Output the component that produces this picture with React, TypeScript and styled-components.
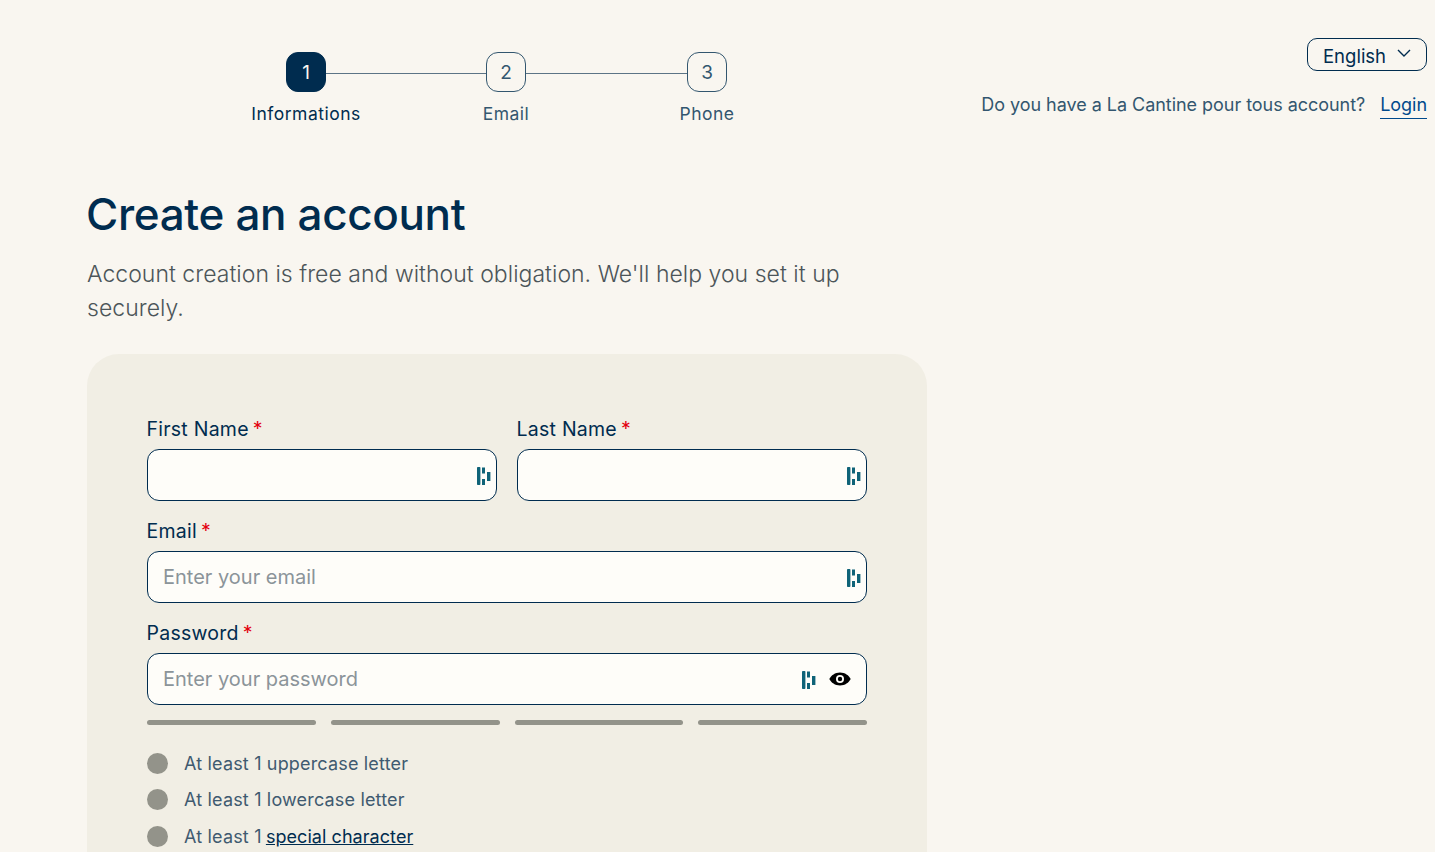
import React from "react";
import styled, { createGlobalStyle } from "styled-components";

const GlobalStyle = createGlobalStyle`
  html, body {
    margin: 0;
    height: 100%;
    overflow: hidden;
    background: #f9f6f0;
    font-family: "Inter", "Noto Sans", sans-serif;
    color: #002c4f;
  }
  * { box-sizing: border-box; }
`;

const Page = styled.div`
  display: flex;
  justify-content: space-between;
  height: 852px;
  overflow: hidden;
  padding: 38px 8px 0 87px;
`;

const Main = styled.main`
  width: 840px;
  flex-shrink: 0;
`;

const Stepper = styled.div`
  display: flex;
  width: 441px;
  margin: 14px 0 0 199px;
`;

const Step = styled.div`
  display: flex;
  flex-direction: column;
  align-items: center;
  width: 40px;
`;

const StepCircle = styled.div<{ $active?: boolean }>`
  width: 40px;
  height: 40px;
  border-radius: 12px;
  display: flex;
  align-items: center;
  justify-content: center;
  font-size: 19px;
  color: ${(p) => (p.$active ? "#f9f6f0" : "#33566f")};
  background: ${(p) => (p.$active ? "#002c4f" : "transparent")};
  border: 1px solid ${(p) => (p.$active ? "#002c4f" : "#33566f")};
`;

const StepLabel = styled.div<{ $active?: boolean }>`
  margin-top: 12px;
  font-size: 17.5px;
  line-height: 20px;
  white-space: nowrap;
  letter-spacing: 0.5px;
  color: ${(p) => (p.$active ? "#002c4f" : "#33566f")};
`;

const StepLine = styled.div<{ $width: number }>`
  width: ${(p) => p.$width}px;
  height: 1px;
  margin-top: 21px;
  background: #5c7486;
`;

const Title = styled.h1`
  margin: 62px 0 0 -1px;
  font-size: 44px;
  line-height: 56px;
  font-weight: 500;
  letter-spacing: -0.35px;
  color: #002c4f;
`;

const Subtitle = styled.p`
  margin: 15px 0 0;
  width: 780px;
  font-size: 23px;
  line-height: 34px;
  font-weight: 300;
  letter-spacing: 0.03px;
  color: #4c5559;
`;

const Card = styled.section`
  margin-top: 29px;
  padding: 60px 60px 40px;
  background: #f1eee4;
  border-radius: 32px;
`;

const Row = styled.div`
  display: flex;
  gap: 20px;
`;

const Field = styled.div`
  flex: 1;
  min-width: 0;
  margin-bottom: 15px;
`;

const Label = styled.label`
  display: block;
  height: 35px;
  margin-left: -0.5px;
  font-size: 19.5px;
  line-height: 30px;
  letter-spacing: 0.25px;
  color: #002c4f;
`;

const Required = styled.span`
  color: #e3000f;
  margin-left: 4px;
`;

const InputBox = styled.div<{ $withEye?: boolean }>`
  display: flex;
  align-items: center;
  height: 52px;
  padding: 0 ${(p) => (p.$withEye ? 15 : 5)}px 0 15px;
  background: #fefdf9;
  border: 1px solid #002c4f;
  border-radius: 12px;
`;

const Input = styled.input`
  flex: 1;
  min-width: 0;
  border: 0;
  outline: 0;
  padding: 0;
  background: transparent;
  font-family: inherit;
  font-size: 20px;
  color: #002c4f;
  &::placeholder {
    color: #8b9499;
    opacity: 1;
  }
`;

const KeySvg = styled.svg`
  margin-top: 2px;
  flex-shrink: 0;
`;

const EyeSvg = styled.svg`
  margin-left: 13px;
  flex-shrink: 0;
`;

const Strength = styled.div`
  display: flex;
  gap: 15px;
  margin-top: 15px;
`;

const Bar = styled.div`
  flex: 1;
  height: 5px;
  border-radius: 3px;
  background: #93938a;
`;

const Rules = styled.ul`
  list-style: none;
  margin: 27px 0 0;
  padding: 0;
  display: flex;
  flex-direction: column;
  gap: 14.5px;
`;

const Rule = styled.li`
  display: flex;
  align-items: center;
  gap: 16px;
  height: 22px;
  font-size: 18px;
  letter-spacing: 0.17px;
  color: #3f5a70;
`;

const Dot = styled.span`
  width: 21px;
  height: 21px;
  border-radius: 50%;
  background: #93938a;
`;

const RuleLink = styled.a`
  margin-left: -1px;
  letter-spacing: 0.06px;
  color: #002c4f;
  text-decoration: underline;
`;

const Side = styled.aside`
  display: flex;
  flex-direction: column;
  align-items: flex-end;
`;

const LangButton = styled.button`
  display: flex;
  align-items: center;
  justify-content: space-between;
  width: 120px;
  height: 33px;
  padding: 2px 15px 0 15px;
  background: transparent;
  border: 1px solid #002c4f;
  border-radius: 10px;
  font-family: inherit;
  font-size: 18.5px;
  color: #002c4f;

  svg {
    margin-bottom: 5px;
  }
`;

const AccountLine = styled.div`
  display: flex;
  align-items: flex-start;
  gap: 15px;
  margin-top: 22px;
  font-size: 18px;
  line-height: 24px;
  letter-spacing: -0.04px;
  color: #33566f;
`;

const Login = styled.a`
  height: 26px;
  color: #004a8c;
  text-decoration: none;
  border-bottom: 1px solid #004a8c;
`;

const KeyIcon = () => (
  <KeySvg width="14" height="18" viewBox="0 0 14 18" fill="#0f6378">
    <rect x="0" y="0" width="3.4" height="18" rx="0.8" />
    <rect x="5" y="0.5" width="3" height="6" />
    <rect x="5" y="12" width="3" height="6" />
    <rect x="10" y="5" width="3.4" height="9" />
  </KeySvg>
);

const EyeIcon = () => (
  <EyeSvg width="22" height="14" viewBox="0 0 22 14">
    <path d="M11 0.5C6 0.5 2.2 3.4 0.3 7 2.2 10.6 6 13.5 11 13.5s8.800-2.900 10.700-6.500C19.800 3.400 16 0.500 11 0.500z" fill="#000" />
    <circle cx="11" cy="7" r="4" fill="#fefdf9" />
    <circle cx="11" cy="7" r="2.200" fill="#000" />
  </EyeSvg>
);

const Chevron = () => (
  <svg width="14" height="8" viewBox="0 0 14 8" fill="none" stroke="#002c4f" strokeWidth="1.400">
    <path d="M1 1l6 6 6-6" />
  </svg>
);

const App = () => (
  <>
    <GlobalStyle />
    <Page>
      <Main>
        <Stepper>
          <Step>
            <StepCircle $active>1</StepCircle>
            <StepLabel $active>Informations</StepLabel>
          </Step>
          <StepLine $width={160} />
          <Step>
            <StepCircle>2</StepCircle>
            <StepLabel>Email</StepLabel>
          </Step>
          <StepLine $width={161} />
          <Step>
            <StepCircle>3</StepCircle>
            <StepLabel>Phone</StepLabel>
          </Step>
        </Stepper>
        <Title>Create an account</Title>
        <Subtitle>
          Account creation is free and without obligation. We'll help you set it up securely.
        </Subtitle>
        <Card>
          <Row>
            <Field>
              <Label>First Name<Required>*</Required></Label>
              <InputBox><Input /><KeyIcon /></InputBox>
            </Field>
            <Field>
              <Label>Last Name<Required>*</Required></Label>
              <InputBox><Input /><KeyIcon /></InputBox>
            </Field>
          </Row>
          <Field>
            <Label>Email<Required>*</Required></Label>
            <InputBox><Input placeholder="Enter your email" /><KeyIcon /></InputBox>
          </Field>
          <Label>Password<Required>*</Required></Label>
          <InputBox $withEye>
            <Input placeholder="Enter your password" />
            <KeyIcon />
            <EyeIcon />
          </InputBox>
          <Strength>
            <Bar />
            <Bar />
            <Bar />
            <Bar />
          </Strength>
          <Rules>
            <Rule><Dot />At least 1 uppercase letter</Rule>
            <Rule><Dot />At least 1 lowercase letter</Rule>
            <Rule><Dot /><span>At least 1 <RuleLink href="#">special character</RuleLink></span></Rule>
          </Rules>
        </Card>
      </Main>
      <Side>
        <LangButton>English<Chevron /></LangButton>
        <AccountLine>
          <span>Do you have a La Cantine pour tous account?</span>
          <Login href="#">Login</Login>
        </AccountLine>
      </Side>
    </Page>
  </>
);

export default App;
